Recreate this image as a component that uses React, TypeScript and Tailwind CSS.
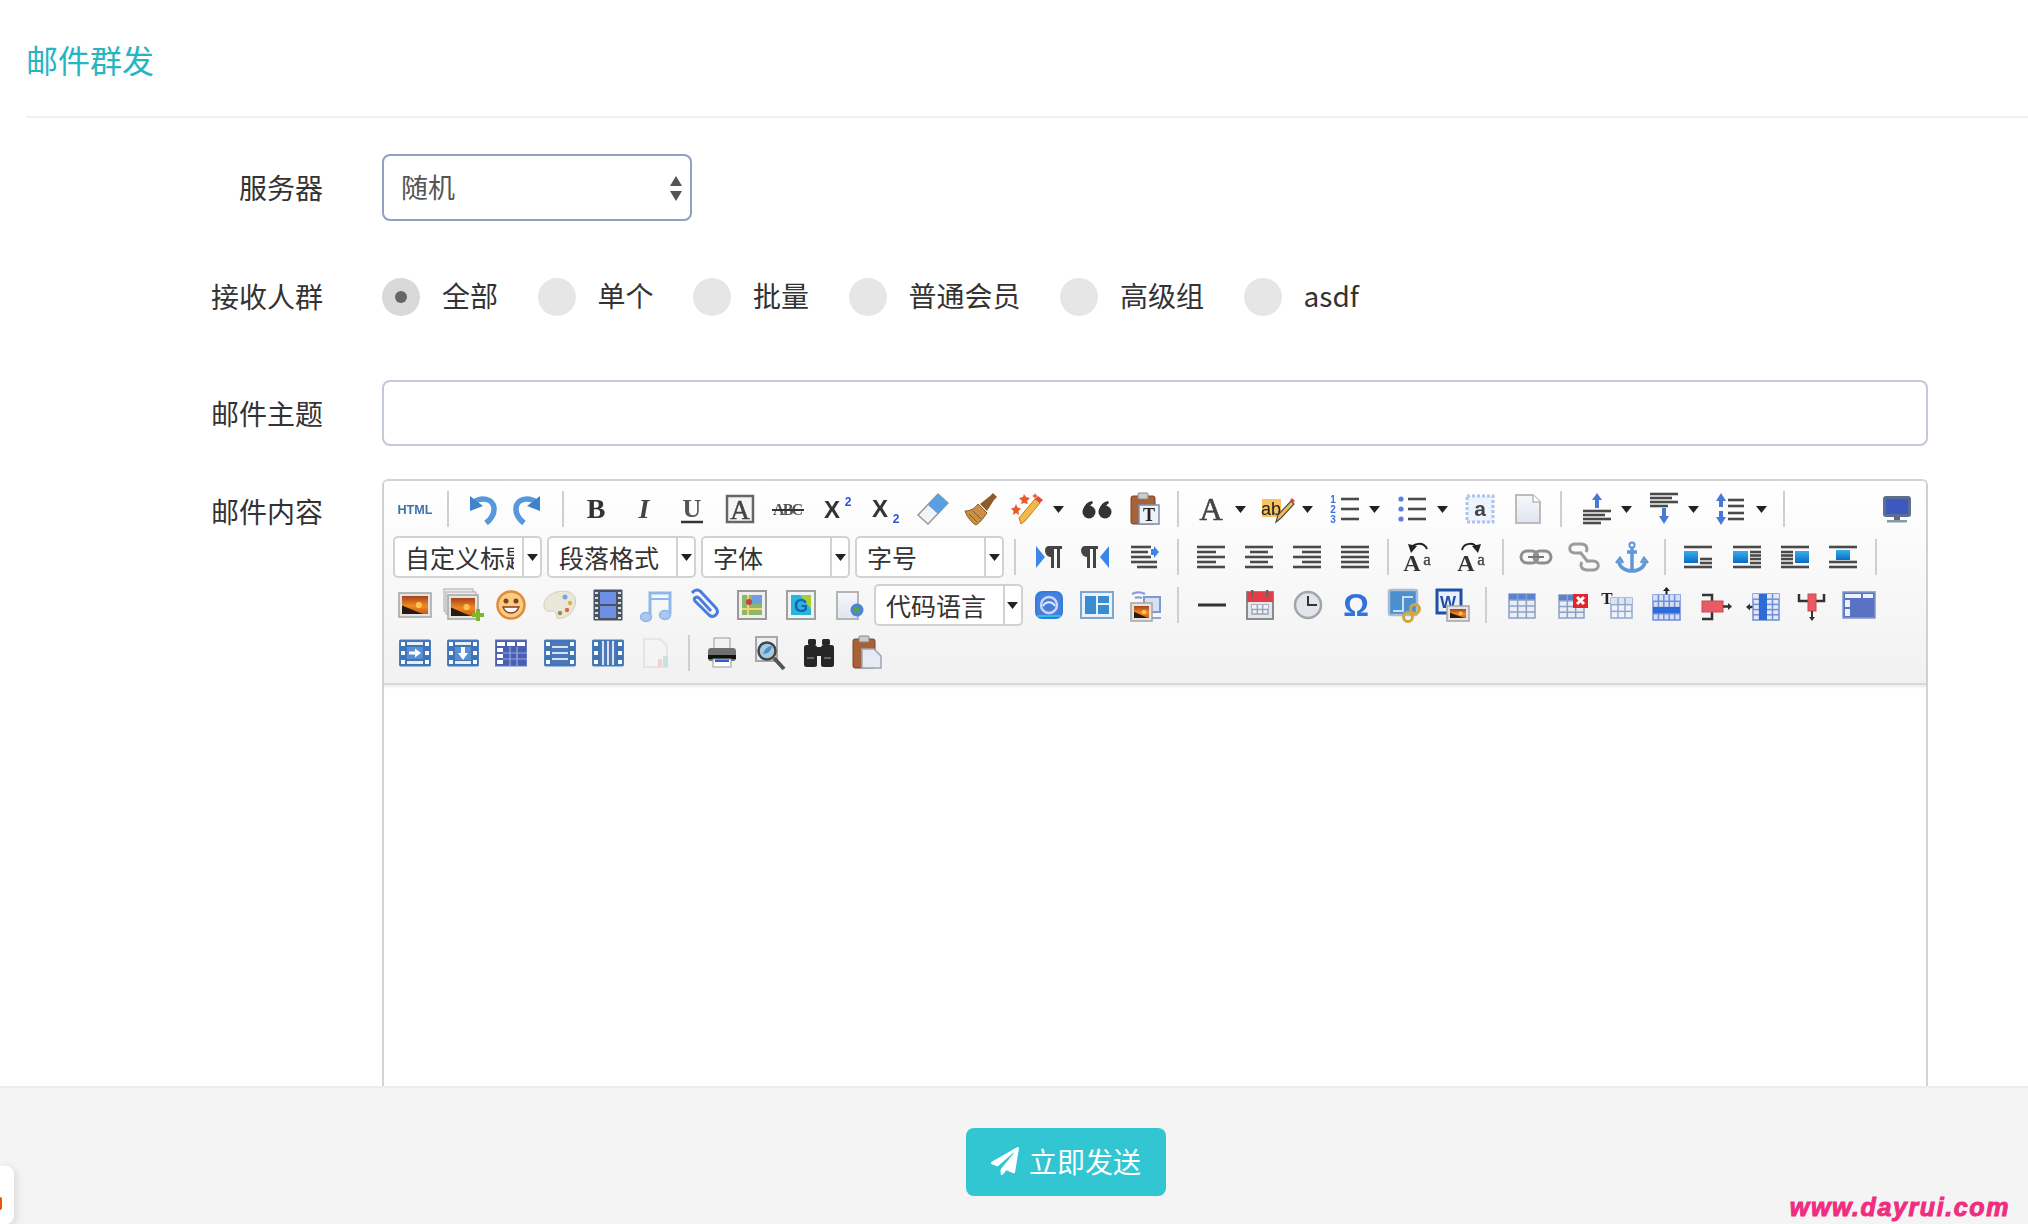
import React from "react";
import { FaPaperPlane } from "react-icons/fa";

const serif = "Liberation Serif, serif";
const arial = "Liberation Sans, sans-serif";

const Arrow = () => (
  <span className="flex h-[48px] w-[19px] shrink-0 items-center justify-start">
    <svg width="11" height="7" viewBox="0 0 11 7"><path d="M0 0h11L5.5 7z" fill="#222" /></svg>
  </span>
);

const Sep = () => (
  <span className="flex h-[48px] w-[18px] shrink-0 items-center justify-center">
    <span className="h-[36px] w-[2px] bg-[#cfcfcf]" />
  </span>
);

const Pic = ({ x = 0, y = 0, w = 30, h = 24 }: { x?: number; y?: number; w?: number; h?: number }) => (
  <g>
    <rect x={x} y={y} width={w} height={h} fill="#e4e4e4" stroke="#a4a4a4" strokeWidth="1.5" />
    <rect x={x + 3} y={y + 3} width={w - 6} height={h - 6} fill="url(#sunset)" />
    <circle cx={x + w * 0.62} cy={y + h * 0.5} r={h * 0.13} fill="#ffc34d" />
    <path d={`M${x + 3} ${y + h - 3}v-${h * 0.35}l${w * 0.65} ${h * 0.35}z`} fill="#2a1a10" />
  </g>
);

const Grid = ({ x, y, w, h, c, r, color = "#8c9fc2", head = "#5b82d1", fill = "#e9edf5" }: { x: number; y: number; w: number; h: number; c: number; r: number; color?: string; head?: string; fill?: string }) => {
  const v = Array.from({ length: c - 1 }, (_, i) => x + ((i + 1) * w) / c);
  const s = Array.from({ length: r - 1 }, (_, i) => y + ((i + 1) * h) / r);
  return (
    <g>
      <rect x={x} y={y} width={w} height={h} fill={fill} stroke={color} strokeWidth="1.5" />
      <rect x={x} y={y} width={w} height={h / r} fill={head} />
      {v.map((a) => <path key={a} d={`M${a} ${y}V${y + h}`} stroke={color} strokeWidth="1.5" />)}
      {s.map((a) => <path key={a} d={`M${x} ${a}H${x + w}`} stroke={color} strokeWidth="1.5" />)}
    </g>
  );
};

const Lines = ({ rows, stroke = "#4a4a4a", w = 2.6 }: { rows: [number, number, number][]; stroke?: string; w?: number }) => (
  <g>
    {rows.map(([x1, x2, y], i) => <path key={i} d={`M${x1} ${y}H${x2}`} stroke={stroke} strokeWidth={w} />)}
  </g>
);

const Strip = ({ children }: { children?: React.ReactNode }) => (
  <g>
    <rect x="4.5" y="7" width="31" height="26" rx="1" fill="#3f74b6" stroke="#4b7fbf" />
    <rect x="6" y="9" width="4" height="4" fill="#fff" />
    <rect x="6" y="18" width="4" height="4" fill="#fff" />
    <rect x="6" y="27" width="4" height="4" fill="#fff" />
    <rect x="30" y="9" width="4" height="4" fill="#fff" />
    <rect x="30" y="18" width="4" height="4" fill="#fff" />
    <rect x="30" y="27" width="4" height="4" fill="#fff" />
    {children}
  </g>
);

const ImgBox = ({ x, y, w, h }: { x: number; y: number; w: number; h: number }) => <rect x={x} y={y} width={w} height={h} fill="url(#azure)" />;

const Down = ({ x, y1, y2, c = "#333" }: { x: number; y1: number; y2: number; c?: string }) => (
  <g><path d={`M${x} ${y1}V${y2 - 3}`} stroke={c} strokeWidth="2" /><path d={`M${x - 3} ${y2 - 4}h6l-3 4z`} fill={c} /></g>
);

const UNDO = <g><path d="M13 13c7-5 19-4 20 6 .5 6-3 11-8 15" fill="none" stroke="#5797dd" strokeWidth="5.5" /><path d="M9 7l0 15 13-5z" fill="#3f83cc" /></g>;

const icons: Record<string, React.ReactNode> = {
  html: <text x="20" y="25" fontSize="13" fontWeight="700" fontFamily={arial} fill="#3f73a8" textAnchor="middle" textLength="35" lengthAdjust="spacingAndGlyphs">HTML</text>,
  undo: UNDO,
  redo: <g transform="translate(40 0) scale(-1 1)">{UNDO}</g>,
  b: <text x="20" y="29" fontSize="28" fontWeight="700" fontFamily={serif} fill="#333" textAnchor="middle">B</text>,
  i: <text x="20" y="29" fontSize="28" fontWeight="700" fontStyle="italic" fontFamily={serif} fill="#444" textAnchor="middle">I</text>,
  u: <g><text x="20" y="28" fontSize="26" fontFamily={serif} fontWeight="700" fill="#555" textAnchor="middle">U</text><path d="M9 33h22" stroke="#333" strokeWidth="2.5" /></g>,
  abox: <g><rect x="7" y="7" width="26" height="26" fill="#f5f5f5" stroke="#666" strokeWidth="2.5" /><text x="20" y="30" fontSize="27" fontFamily={serif} fill="#444" textAnchor="middle" stroke="#444" strokeWidth=".5">A</text></g>,
  abc: <g><text x="20" y="26" fontSize="16" fontWeight="700" fontFamily={serif} fill="#555" textAnchor="middle" textLength="30">ABC</text><path d="M4 21h32" stroke="#333" strokeWidth="2" /></g>,
  sup: <g><text x="15" y="29" fontSize="24" fontWeight="700" fontFamily={arial} fill="#333" textAnchor="middle">X</text><text x="31" y="17" fontSize="12" fontWeight="700" fontFamily={arial} fill="#2c52d8" textAnchor="middle">2</text></g>,
  sub: <g><text x="15" y="28" fontSize="24" fontWeight="700" fontFamily={arial} fill="#333" textAnchor="middle">X</text><text x="31" y="34" fontSize="12" fontWeight="700" fontFamily={arial} fill="#2c52d8" textAnchor="middle">2</text></g>,
  eraser: <g><path d="M5 26L25 5l10 9-20 21z" fill="#f4f4f4" stroke="#999" strokeWidth="1.5" /><path d="M15 16L25 5l10 9-10 11z" fill="#5b9fe3" /></g>,
  brush: <g><path d="M4 22c6 0 10-3 13-7l9 9c-3 4-6 9-11 12-4-2-9-8-11-14z" fill="#c98f45" stroke="#8a5a28" /><path d="M8 25l8 8M12 22l8 8" stroke="#8a5a28" /><path d="M19 15l10-8 3-3 4 4-3 3-7 11z" fill="#8f5a2a" /></g>,
  wand: <g><path d="M12 35l-2-6 16-19 5 4-15 18z" fill="#f0b948" stroke="#b97f20" /><path d="M26 10l3-3 5 4-3 3z" fill="#e04848" /><path d="M15 5l2 3 4 1-3 3 1 3-4-1-3 1 1-3-3-3 4-1z" fill="#e85a2c" /><path d="M7 15l1.5 3.5 3.5 1-2.5 2.5.5 4-3-2-3 2 .5-4-2.5-2.5 3.5-1z" fill="#e85a2c" /><path d="M26 4l1 2 2 1-2 1-1 2-1-2-2-1 2-1z" fill="#e85a2c" /></g>,
  quote: <g fill="#333"><circle cx="12" cy="23" r="6.5" /><circle cx="28" cy="23" r="6.5" /><path d="M6 23c0-6 4-10 9-11l1 2c-3 2-4 4-4 8zM22 23c0-6 4-10 9-11l1 2c-3 2-4 4-4 8z" /></g>,
  pasteT: <g><rect x="6" y="7" width="24" height="28" rx="2" fill="#a8623a" stroke="#7b4527" /><rect x="13" y="4" width="10" height="6" rx="1" fill="#ccc" stroke="#888" /><rect x="14" y="16" width="20" height="19" fill="#eef2f8" stroke="#7d8ea8" strokeWidth="1.5" /><text x="24" y="32" fontSize="18" fontWeight="700" fontFamily={serif} fill="#222" textAnchor="middle">T</text></g>,
  fore: <text x="20" y="31" fontSize="32" fontFamily={serif} fill="#444" textAnchor="middle" stroke="#444" strokeWidth=".6">A</text>,
  back: <g><rect x="4" y="10" width="19" height="18" fill="#f8c25f" /><text x="13" y="26" fontSize="18" fontWeight="500" fontFamily={arial} fill="#222" textAnchor="middle">ab</text><path d="M18 33l2-7 13-14 3 3-13 14z" fill="#f0c04f" stroke="#4d4d4d" strokeWidth="1.2" /><path d="M32 11l2-2 3 3-2 2z" fill="#e04848" /></g>,
  ol: <g><text x="8" y="14" fontSize="10" fontWeight="700" fontFamily={arial} fill="#3a72e0" textAnchor="middle">1</text><text x="8" y="24" fontSize="10" fontWeight="700" fontFamily={arial} fill="#3a72e0" textAnchor="middle">2</text><text x="8" y="34" fontSize="10" fontWeight="700" fontFamily={arial} fill="#3a72e0" textAnchor="middle">3</text><Lines rows={[[16, 34, 10], [16, 34, 20], [16, 34, 30]]} /></g>,
  ul: <g><circle cx="9" cy="10" r="2.6" fill="#5b7fe0" /><circle cx="9" cy="20" r="2.6" fill="#5b7fe0" /><circle cx="9" cy="30" r="2.6" fill="#5b7fe0" /><Lines rows={[[16, 34, 10], [16, 34, 20], [16, 34, 30]]} /></g>,
  anchorA: <g><rect x="7" y="7" width="26" height="26" fill="#eef4fd" stroke="#a8c4f0" strokeWidth="3" strokeDasharray="3 2" /><text x="20" y="27" fontSize="21" fontWeight="700" fontFamily={arial} fill="#444" textAnchor="middle">a</text></g>,
  page: <g><path d="M8 6h17l7 7v21H8z" fill="url(#paper)" stroke="#bbb" strokeWidth="2" /><path d="M25 6v7h7" fill="#fff" stroke="#bbb" strokeWidth="1.5" /></g>,
  rowBefore: <g><path d="M20 4l5 7h-3v8h-4v-8h-3z" fill="#4a78d6" /><Lines rows={[[6, 34, 22], [6, 28, 26], [6, 34, 30], [6, 24, 34]]} /></g>,
  rowAfter: <g><Lines rows={[[6, 34, 5], [6, 28, 9], [6, 34, 13], [6, 24, 17]]} /><path d="M18 19h4v8h3l-5 8-5-8h3z" fill="#4a78d6" /></g>,
  lineHeight: <g><path d="M10 4l5 8h-3v6H8v-6H5zM8 22h4v6h3l-5 8-5-8h3z" fill="#4a78d6" /><Lines rows={[[17, 33, 11], [17, 33, 17], [17, 33, 24], [17, 33, 30]]} /></g>,
  full: <g><rect x="6" y="7" width="28" height="21" rx="3" fill="#5c6f8f" /><rect x="9" y="10" width="22" height="15" fill="#3e58c0" /><rect x="17" y="28" width="6" height="3" fill="#667" /><rect x="10" y="31" width="20" height="2.5" fill="#8899a8" /></g>,
  ltr: <g><path d="M8 9l9 11-9 11z" fill="#3b86e8" /><path d="M21 9h13v3h-2v19h-3V12h-3v19h-3V20c-7 0-8-11-2-11z" fill="#444" /></g>,
  rtl: <g><path d="M9 9h13v3h-2v19h-3V12h-3v19h-3V20c-7 0-8-11-2-11z" fill="#444" /><path d="M33 9l-9 11 9 11z" fill="#3b86e8" /></g>,
  indent: <g><Lines rows={[[7, 27, 10], [7, 24, 15], [7, 27, 20], [7, 33, 25], [13, 33, 30]]} /><path d="M27 12h3v-3l5 6-5 6v-3h-3z" fill="#3b86e8" /></g>,
  left: <Lines rows={[[6, 34, 10], [6, 25, 15], [6, 34, 20], [6, 25, 25], [6, 34, 30]]} />,
  center: <Lines rows={[[6, 34, 10], [11, 29, 15], [6, 34, 20], [11, 29, 25], [6, 34, 30]]} />,
  right: <Lines rows={[[6, 34, 10], [15, 34, 15], [6, 34, 20], [15, 34, 25], [6, 34, 30]]} />,
  justify: <Lines rows={[[6, 34, 10], [6, 34, 15], [6, 34, 20], [6, 34, 25], [6, 34, 30]]} />,
  caseUp: <g transform="translate(-5 0)"><path d="M15 13c2-8 13-8 16-1" fill="none" stroke="#222" strokeWidth="2" /><path d="M12 7l9 2-6 7z" fill="#222" /><text x="16" y="34" fontSize="24" fontWeight="700" fontFamily={serif} fill="#333" textAnchor="middle">A</text><text x="31" y="28" fontSize="17" fontFamily={serif} fill="#444" textAnchor="middle" stroke="#444" strokeWidth=".4">a</text></g>,
  caseDown: <g transform="translate(2 0)"><path d="M10 13c2-8 13-8 15-1" fill="none" stroke="#222" strokeWidth="2" /><path d="M29 7l-9 2 6 7z" fill="#222" /><text x="14" y="34" fontSize="24" fontWeight="700" fontFamily={serif} fill="#333" textAnchor="middle">A</text><text x="29" y="28" fontSize="17" fontFamily={serif} fill="#444" textAnchor="middle" stroke="#444" strokeWidth=".4">a</text></g>,
  link: <g fill="none" stroke="#8f8f8f" strokeWidth="3"><rect x="5" y="14" width="17" height="12" rx="6" /><rect x="18" y="14" width="17" height="12" rx="6" /><path d="M12 20h16" stroke="#777" strokeWidth="2" /></g>,
  unlink: <g fill="none" stroke="#9c9c9c" strokeWidth="3"><path d="M17 16h-6c-7 0-7-9 0-9h6c6 0 7 5 5 8" /><path d="M23 24h6c7 0 7 9 0 9h-6c-6 0-7-5-5-8" /><path d="M16 15l8 10" /></g>,
  anchor: <g fill="none" stroke="#6097d6" strokeWidth="3"><circle cx="20" cy="8" r="2.6" strokeWidth="2" /><path d="M20 11v23M15 15h10M7 24c0 6 6 10 13 10s13-4 13-10" strokeWidth="3.5" /><path d="M4 26l4-5 3 5M29 26l3-5 4 5" strokeWidth="2.5" /></g>,
  imgL: <g><Lines rows={[[6, 34, 10], [6, 34, 30], [22, 34, 22], [22, 34, 26]]} /><ImgBox x={6} y={14} w={14} h={12} /></g>,
  imgR: <g><Lines rows={[[6, 34, 10], [6, 34, 30], [23, 34, 15], [23, 34, 18.5], [23, 34, 22], [23, 34, 26]]} /><ImgBox x={6} y={14} w={15} h={12} /></g>,
  imgLR: <g><Lines rows={[[6, 34, 10], [6, 34, 30], [6, 18, 15], [6, 18, 18.5], [6, 18, 22], [6, 18, 26]]} /><ImgBox x={20} y={14} w={14} h={12} /></g>,
  imgC: <g><Lines rows={[[6, 34, 10], [6, 34, 25], [6, 34, 30]]} /><ImgBox x={13} y={13} w={14} h={10} /></g>,
  image: <Pic x={4} y={8} w={32} h={24} />,
  images: <g><rect x="1" y="4" width="29" height="22" fill="#eee" stroke="#aaa" /><rect x="3" y="7" width="30" height="22" fill="#eee" stroke="#aaa" /><Pic x={5} y={10} w={30} h={24} /><path d="M29 28h4v-4h4v4h4v4h-4v4h-4v-4h-4z" fill="#7cb82e" /></g>,
  emoji: <g><circle cx="20" cy="20" r="13.5" fill="#f5cd86" stroke="#e38a36" strokeWidth="2.5" /><circle cx="15" cy="16" r="2.5" fill="#8a3d17" /><circle cx="25" cy="16" r="2.5" fill="#8a3d17" /><path d="M12 22c3 8 13 8 16 0z" fill="#fff" stroke="#8a3d17" strokeWidth="1.3" /></g>,
  palette: <g><path d="M4 20C4 10 18 4 29 7c8 3 8 11 4 18-4 7-11 9-16 8 0-4-2-8-6-7-4 1-7-1-7-6z" fill="#e9e6da" stroke="#d0ccbd" /><circle cx="25" cy="12" r="2.5" fill="#7aa6de" /><circle cx="30" cy="18" r="2.2" fill="#e2b13c" /><circle cx="27" cy="25" r="2.2" fill="#d96a4a" /><circle cx="20" cy="28" r="2.2" fill="#9c8d55" /></g>,
  film: <g><rect x="5.5" y="4.5" width="29" height="31" rx="1" fill="#4a5460" /><path d="M7 8h3M7 13h3M7 18h3M7 23h3M7 28h3M7 33h3M30 8h3M30 13h3M30 18h3M30 23h3M30 28h3M30 33h3" stroke="#ddd" strokeWidth="2" /><rect x="12" y="7" width="16" height="12" fill="#6f8fe6" /><rect x="12" y="21" width="16" height="12" fill="#6f8fe6" /></g>,
  music: <g fill="none" stroke="#8fb8ea" strokeWidth="3"><path d="M14 31V8h20v21" /><path d="M14 14h20" strokeWidth="2" /><ellipse cx="10" cy="32" rx="5.5" ry="4.5" fill="#a9c9ef" strokeWidth="1.5" /><ellipse cx="29" cy="30" rx="5.5" ry="4.5" fill="#a9c9ef" strokeWidth="1.5" /></g>,
  clip: <path d="M8 8c3-4 7-4 10 0l14 15c4 5-2 11-7 7L11 16c-2-3 1-5 4-3l12 13" fill="none" stroke="#4b7de0" strokeWidth="3" />,
  map: <g><rect x="6" y="6" width="28" height="28" fill="#eee" stroke="#999" strokeWidth="2" /><rect x="10" y="10" width="20" height="20" fill="#8db66a" /><rect x="20" y="10" width="10" height="9" fill="#6d9fe0" /><path d="M10 24h20M16 10v20" stroke="#ecd86b" strokeWidth="2" /><circle cx="17" cy="17" r="3" fill="#d23c3c" /></g>,
  gmap: <g><rect x="6" y="6" width="28" height="28" fill="#eef3f7" stroke="#a0a0a0" strokeWidth="2" /><rect x="10" y="10" width="20" height="20" fill="#28b6d8" /><path d="M19 10h11v14z" fill="#a7cf2e" /><text x="20" y="27" fontSize="18" fontWeight="700" fontFamily={arial} fill="#1a5dbb" textAnchor="middle">G</text></g>,
  frame: <g><path d="M8 7h21v27H8z" fill="url(#paper)" stroke="#b5b5b5" strokeWidth="2" /><circle cx="28" cy="25" r="6.5" fill="#4b86d6" /><path d="M24 23c3-3 6-1 7 2-2 3-4 1-5 4z" fill="#5f9e4a" /></g>,
  bdfl: <g><rect x="6" y="6" width="28" height="28" rx="7" fill="#2f7fe3" /><rect x="8" y="8" width="24" height="24" rx="6" fill="#4a7ed8" /><circle cx="20" cy="20" r="8" fill="none" stroke="#c7d9f6" strokeWidth="2.5" /><path d="M14 21c3-5 9-5 12 0" fill="none" stroke="#e6eefb" strokeWidth="2" /><path d="M8 31h24" stroke="#2fc0dc" strokeWidth="2" /></g>,
  tpl: <g><rect x="4" y="7" width="32" height="26" fill="#e9f1fa" stroke="#7ea6cf" strokeWidth="2" /><rect x="8" y="11" width="11" height="18" fill="#3a8cd2" /><rect x="21" y="11" width="11" height="7" fill="#3a8cd2" /><rect x="21" y="20" width="11" height="9" fill="#3a8cd2" /></g>,
  scrawl: <g><path d="M7 9a14 14 0 0 1 13 0M10 13a8 8 0 0 1 7 0" fill="none" stroke="#8e96d8" strokeWidth="2" /><rect x="19" y="12" width="16" height="15" fill="#d5e2f6" stroke="#7b9ad0" strokeWidth="2" /><path d="M24 33h12" stroke="#8fa9d5" strokeWidth="2" /><Pic x={6} y={18} w={21} h={18} /></g>,
  hr: <path d="M6 20h28" stroke="#333" strokeWidth="3" />,
  date: <g><rect x="7" y="7" width="26" height="27" fill="#e2e5ea" stroke="#8a8a8a" strokeWidth="2" /><rect x="7" y="7" width="26" height="10" fill="#e63c4a" /><rect x="11" y="5" width="2.5" height="7" fill="#666" /><rect x="26" y="5" width="2.5" height="7" fill="#666" /><Grid x={12} y={20} w={16} h={9} c={3} r={2} color="#9ea5b2" head="#eef2fa" fill="#eef2fa" /></g>,
  time: <g><circle cx="20" cy="20" r="13" fill="#e2e5ea" stroke="#a1a5ad" strokeWidth="2.5" /><path d="M20 11v9h9" fill="none" stroke="#333" strokeWidth="2" /></g>,
  omega: <text x="20" y="31" fontSize="32" fontWeight="700" fontFamily={arial} fill="#3272dc" textAnchor="middle">Ω</text>,
  snap: <g><rect x="5" y="5" width="28" height="25" rx="2" fill="#4b8fcf" stroke="#a9bdd4" strokeWidth="2.5" /><path d="M9 26h10V12h10" fill="none" stroke="#c7def5" strokeWidth="2" /><circle cx="31" cy="24" r="4.5" fill="none" stroke="#d3a63d" strokeWidth="3" /><circle cx="24" cy="32" r="4.5" fill="none" stroke="#d3a63d" strokeWidth="3" /></g>,
  word: <g><rect x="5" y="5" width="24" height="23" fill="#eaf0fb" stroke="#1f50a8" strokeWidth="3" /><text x="16" y="23" fontSize="17" fontWeight="700" fontFamily={arial} fill="#1f50a8" textAnchor="middle">W</text><Pic x={15} y={21} w={22} h={15} /></g>,
  table: <Grid x={7} y={9} w={26} h={24} c={3} r={4} />,
  tableDel: <g><Grid x={9} y={10} w={25} h={23} c={3} r={4} /><rect x="23" y="9" width="15" height="14" fill="#e5232f" /><path d="M27 12l7 7M34 12l-7 7" stroke="#fff" strokeWidth="3" /></g>,
  tableTitle: <g><text x="9" y="19" fontSize="17" fontWeight="700" fontFamily={serif} fill="#222" textAnchor="middle">T</text><Grid x={13} y={13} w={21} h={20} c={3} r={3} head="#dbe4f3" fill="#eef2fa" color="#94a8d0" /></g>,
  rowIns: <g><path d="M20.5 2l3.5 4h-2.5v5h-2V6H17z" fill="#222" /><Grid x={7} y={10} w={27} h={25} c={5} r={4} color="#6f8ed6" head="#d6dff3" fill="#d6dff3" /><rect x="7" y="22" width="27" height="6" fill="#2f6bd6" /></g>,
  rowDel: <g><path d="M8 10h10v6M18 27v7H8" fill="none" stroke="#333" strokeWidth="2.5" /><rect x="8" y="16" width="21" height="11" fill="#e85a64" stroke="#c74a52" /><path d="M29 21.5h6" stroke="#333" strokeWidth="2.5" /><path d="M34 18l4 3.5-4 3.5z" fill="#333" /></g>,
  colIns: <g><path d="M6 22h5" stroke="#333" strokeWidth="2.5" /><path d="M7 18.5l-4 3.5 4 3.5z" fill="#333" /><Grid x={10} y={9} w={26} h={26} c={4} r={5} color="#6f8ed6" head="#e3e9f7" fill="#e3e9f7" /><rect x="16" y="9" width="8" height="26" fill="#2f6bd6" /></g>,
  colDel: <g><path d="M8 9v7h9M33 9v7h-8" fill="none" stroke="#333" strokeWidth="2.5" /><rect x="17" y="9" width="8" height="17" fill="#e85a64" stroke="#c74a52" /><Down x={21} y1={26} y2={36} /></g>,
  merge: <g><rect x="4" y="7" width="32" height="26" fill="#5a72c4" stroke="#7f97cc" strokeWidth="1.5" /><rect x="6" y="9" width="16" height="4" fill="#eef2fa" /><rect x="24" y="9" width="10" height="4" fill="#eef2fa" /><rect x="6" y="15" width="5" height="7" fill="#eef2fa" /><rect x="6" y="24" width="5" height="7" fill="#eef2fa" /></g>,
  mergeR: <Strip><rect x="12" y="9" width="16" height="3" fill="#e8eff9" /><rect x="12" y="14" width="16" height="12" fill="#5a90d2" /><path d="M14 18.5h6v-3l6 4.5-6 4.5v-3h-6z" fill="#fff" /><rect x="12" y="28" width="16" height="3" fill="#e8eff9" /></Strip>,
  mergeD: <Strip><rect x="12" y="9" width="16" height="3" fill="#e8eff9" /><rect x="12" y="14" width="16" height="13" fill="#5a90d2" /><path d="M18 14h4v6h3l-5 7-5-7h3z" fill="#fff" /><rect x="12" y="28" width="16" height="3" fill="#e8eff9" /></Strip>,
  splitAll: <g><rect x="4.5" y="7" width="31" height="26" fill="#4a5fb3" stroke="#6079c0" /><rect x="6" y="9" width="8" height="4" fill="#fff" /><rect x="16" y="9" width="8" height="4" fill="#fff" /><rect x="26" y="9" width="8" height="4" fill="#fff" /><rect x="6" y="15" width="6" height="4" fill="#fff" /><rect x="6" y="21" width="6" height="4" fill="#fff" /><rect x="6" y="27" width="6" height="4" fill="#fff" /><path d="M19 14v19M26 14v19M12 20h24M12 26h24" stroke="#9aaae0" strokeWidth="1.2" /></g>,
  splitRows: <Strip><rect x="12" y="9" width="16" height="22" fill="#4a78bb" /><path d="M12 14h16M12 20h16M12 26h16" stroke="#d8e4f5" strokeWidth="2" /></Strip>,
  splitCols: <Strip><rect x="12" y="9" width="16" height="22" fill="#4a78bb" /><path d="M15 8v24M20 8v24M25 8v24" stroke="#d8e4f5" strokeWidth="2" /></Strip>,
  pageFaint: <g opacity=".35"><path d="M8 6h16l7 7v21H8z" fill="#f7f7f7" stroke="#ccc" strokeWidth="2" /><path d="M22 34v-8h4v8z" fill="#e89a8c" /><path d="M27 34v-11h5v11z" fill="#7cc4c0" /></g>,
  print: <g><rect x="12" y="5" width="16" height="12" fill="#f0f2f6" stroke="#999" /><rect x="6" y="15" width="28" height="13" rx="3" fill="#707070" /><rect x="6" y="22" width="28" height="4" fill="#111" /><rect x="11" y="26" width="18" height="8" fill="#fff" stroke="#999" /><rect x="13" y="26.5" width="14" height="2.5" fill="#2a5fd2" /></g>,
  preview: <g><path d="M6 4h21v24H6z" fill="#e9edf4" stroke="#a8a8a8" strokeWidth="2" /><circle cx="17" cy="18" r="8.5" fill="#a6c9e0" stroke="#444" strokeWidth="2.5" /><path d="M13 21c2-6 6-8 9-8-1 5-4 8-9 8z" fill="#4a91cf" /><path d="M24 25l10 11" stroke="#555" strokeWidth="4" /></g>,
  search: <g fill="#262626"><rect x="9" y="6" width="8" height="6" rx="1.5" /><rect x="23" y="6" width="8" height="6" rx="1.5" /><rect x="5" y="12" width="13" height="22" rx="2.5" /><rect x="22" y="12" width="13" height="22" rx="2.5" /><rect x="17" y="14" width="6" height="9" /><path d="M8 25h7M25 25h7" stroke="#666" strokeWidth="2" /></g>,
  paste: <g><rect x="6" y="6" width="22" height="29" rx="2" fill="#a8623a" stroke="#7b4527" /><rect x="12" y="3" width="10" height="6" rx="1" fill="#ccc" stroke="#888" /><path d="M15 16h12l7 7v12H15z" fill="#e6eaf2" stroke="#9da6b5" strokeWidth="1.5" /></g>,
};

const Ic = ({ n }: { n: string }) => (
  <span className="flex h-[48px] w-[48.2px] shrink-0 items-center justify-center">
    <svg width="40" height="40" viewBox="0 0 40 40" className="overflow-visible blur-[0.6px]">{icons[n]}</svg>
  </span>
);

const Combo = ({ label, cls = "ml-[3px]" }: { label: string; cls?: string }) => (
  <span className={`mr-[2px] flex h-[42px] w-[149px] shrink-0 items-center overflow-hidden rounded-[5px] border-2 border-[#d2d2d2] bg-white ${cls}`}>
    <span className="w-[119px] shrink-0 pl-[10px]">
      <span className="block overflow-hidden whitespace-nowrap text-[25px] leading-[38px] text-[#333]">{label}</span>
    </span>
    <span className="ml-auto flex h-full w-[18px] shrink-0 items-center justify-center border-l-2 border-[#d2d2d2]">
      <svg width="11" height="7" viewBox="0 0 11 7"><path d="M0 0h11L5.5 7z" fill="#222" /></svg>
    </span>
  </span>
);

const Row = ({ items }: { items: string[] }) => (
  <div className="flex h-[48px] items-center">
    {items.map((t, i) =>
      t === "|" ? <Sep key={i} /> : t === "v" ? <Arrow key={i} /> : t === "_" ? <span key={i} className="w-[3px] shrink-0" /> : <Ic key={i} n={t} />
    )}
  </div>
);

const radios = ["全部", "单个", "批量", "普通会员", "高级组", "asdf"];

const Label = ({ children, cls = "" }: { children: React.ReactNode; cls?: string }) => (
  <div className={`w-[323px] shrink-0 text-right text-[28px] leading-[40px] text-[#333] ${cls}`}>{children}</div>
);

export default function App() {
  return (
    <div className="relative flex h-[1224px] w-[2028px] flex-col overflow-hidden bg-white font-['Noto_Sans_CJK_SC','Noto_Sans',sans-serif]">
      <svg width="0" height="0" className="absolute">
        <defs>
          <linearGradient id="sunset" x1="0" y1="0" x2="0" y2="1">
            <stop offset="0" stopColor="#a8401c" />
            <stop offset=".55" stopColor="#ef8a22" />
            <stop offset="1" stopColor="#c75a17" />
          </linearGradient>
          <linearGradient id="azure" x1="0" y1="0" x2="0" y2="1">
            <stop offset="0" stopColor="#35aef0" />
            <stop offset="1" stopColor="#0c6bc0" />
          </linearGradient>
          <linearGradient id="paper" x1="0" y1="0" x2="0" y2="1">
            <stop offset="0" stopColor="#f7f8fb" />
            <stop offset="1" stopColor="#dfe4f0" />
          </linearGradient>
        </defs>
      </svg>
      <main className="min-h-0 flex-1 overflow-hidden">
        <div className="ml-[26px] flex h-[118px] items-start border-b-2 border-[#eef1f5] pt-[37px]">
          <h1 className="text-[32px] leading-[44px] text-[#27b5c1]">邮件群发</h1>
        </div>
        <div className="mt-[36px] flex items-center">
          <Label cls="pb-[2px]">服务器</Label>
          <div className="relative ml-[59px] flex h-[67px] w-[310px] items-center rounded-[8px] border-2 border-[#8fa1c0] pl-[17px] text-[27px] text-[#555]">
            随机
            <svg className="absolute right-[7px] top-[20px]" width="14" height="25" viewBox="0 0 14 25"><path d="M7 0l6 10H1zM1 15h12l-6 10z" fill="#555" /></svg>
          </div>
        </div>
        <div className="mt-[57px] flex h-[38px] items-center">
          <Label cls="pb-[3px]">接收人群</Label>
          <div className="ml-[59px] flex items-center gap-[39.5px]">
            {radios.map((r, i) => (
              <label key={r} className="flex items-center gap-[22px]">
                <span className={`flex h-[38px] w-[38px] items-center justify-center rounded-full ${i === 0 ? "bg-[#d9d9d9]" : "bg-[#e6e6e6]"}`}>
                  {i === 0 && <span className="h-[12px] w-[12px] rounded-full bg-[#666]" />}
                </span>
                <span className="pb-[4px] text-[28px] leading-[40px] text-[#333]">{r}</span>
              </label>
            ))}
          </div>
        </div>
        <div className="mt-[64px] flex items-center">
          <Label>邮件主题</Label>
          <div className="ml-[59px] h-[66px] w-[1546px] rounded-[8px] border-2 border-[#c2cad8] bg-white" />
        </div>
        <div className="mt-[33px] flex items-start">
          <Label cls="pt-[12px]">邮件内容</Label>
          <div className="ml-[59px] h-[800px] w-[1546px] rounded-[6px] border-2 border-[#d4d4d4] bg-white">
            <div className="h-[204px] rounded-t-[4px] border-b-2 border-[#d8d8d8] bg-gradient-to-b from-white to-[#f1f1f1] pl-[7px] pr-[5px] pt-[4px] shadow-[0_2px_3px_rgba(0,0,0,0.08)]">
              <div className="flex h-[48px] items-center justify-between">
                <Row items={["html", "|", "undo", "redo", "|", "b", "i", "u", "abox", "abc", "sup", "sub", "eraser", "brush", "wand", "v", "quote", "pasteT", "|", "fore", "v", "back", "v", "ol", "v", "ul", "v", "anchorA", "page", "|", "_", "rowBefore", "v", "rowAfter", "v", "lineHeight", "v", "|"]} />
                <Ic n="full" />
              </div>
              <div className="-ml-[1px] flex h-[48px] items-center">
                <Combo label="自定义标题" />
                <Combo label="段落格式" />
                <Combo label="字体" />
                <Combo label="字号" />
                <Row items={["|", "ltr", "rtl", "indent", "|", "left", "center", "right", "justify", "|", "caseUp", "caseDown", "|", "link", "unlink", "anchor", "|", "imgL", "imgR", "imgLR", "imgC", "|"]} />
              </div>
              <div className="flex h-[48px] items-center">
                <Row items={["image", "images", "emoji", "palette", "film", "music", "clip", "map", "gmap", "frame"]} />
                <Combo label="代码语言" cls="ml-[1px]" />
                <Row items={["bdfl", "tpl", "scrawl", "|", "hr", "date", "time", "omega", "snap", "word", "|", "_", "table", "tableDel", "tableTitle", "rowIns", "rowDel", "colIns", "colDel", "merge"]} />
              </div>
              <Row items={["mergeR", "mergeD", "splitAll", "splitRows", "splitCols", "pageFaint", "|", "print", "preview", "search", "paste"]} />
            </div>
          </div>
        </div>
      </main>
      <footer className="relative flex h-[138px] shrink-0 items-start justify-center border-t-2 border-[#e9edf1] bg-[#f4f4f5] pl-[104px] pt-[40px]">
        <button className="flex h-[68px] w-[200px] items-center justify-center gap-[10px] rounded-[8px] bg-[#32c5d2] pb-[2px] text-[28px] leading-none text-white">
          <FaPaperPlane className="h-[28px] w-[28px]" />
          立即发送
        </button>
        <div className="absolute bottom-[3px] right-[18px] font-['Liberation_Sans',sans-serif] text-[25px] font-bold italic leading-[28px] tracking-[1.6px] text-[#f02d7f] [-webkit-text-stroke:1px_#f02d7f]">www.dayrui.com</div>
      </footer>
      <div className="absolute bottom-0 left-0 h-[58px] w-[14px] rounded-r-[8px] bg-white shadow-[2px_2px_8px_rgba(0,0,0,0.12)]">
        <span className="absolute left-0 top-[31px] h-[13px] w-[2px] rounded-r-full bg-[#f04e12]" />
      </div>
    </div>
  );
}
